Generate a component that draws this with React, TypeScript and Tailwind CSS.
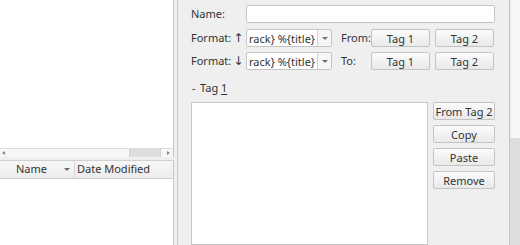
import React from "react";

const font = { fontFamily: '"Noto Sans", "Open Sans", sans-serif' };

function Btn({ label, className = "" }: { label: React.ReactNode; className?: string }) {
  return (
    <div
      className={`flex h-[18px] items-center justify-center rounded-[2px] border border-[#c4c4c4] bg-gradient-to-b from-[#fbfbfb] to-[#e9e9e9] text-[11px] leading-none text-[#333333] ${className}`}
    >
      {label}
    </div>
  );
}

function Combo() {
  return (
    <div className="flex h-[18px] w-[86px] overflow-hidden rounded-[2px] border border-[#c4c4c4] bg-white">
      <div className="flex flex-1 items-center overflow-hidden whitespace-nowrap pl-[2px] text-[11px] leading-none text-[#333333]">
        {"rack} %{title}"}
      </div>
      <div className="flex w-[14px] items-center justify-center border-l border-[#d4d4d4] bg-[#f6f6f6]">
        <span className="block h-0 w-0 border-x-[3px] border-t-[3px] border-x-transparent border-t-[#707070]" />
      </div>
    </div>
  );
}

function FormatRow({ arrow, side }: { arrow: string; side: string }) {
  return (
    <div className="flex h-[18px] items-center">
      <div className="flex w-[55px] items-center whitespace-nowrap text-[11px]">
        Format:
        <span className="ml-[2px] text-[12px] leading-none" style={{ fontFamily: '"DejaVu Sans", sans-serif' }}>
          {arrow}
        </span>
      </div>
      <Combo />
      <div className="ml-[9px] w-[30px] text-[11px]">{side}</div>
      <Btn label="Tag 1" className="w-[59px]" />
      <Btn label="Tag 2" className="ml-[5px] w-[59px]" />
    </div>
  );
}

export default function App() {
  return (
    <div
      className="flex h-[245px] w-[520px] overflow-hidden bg-[#efefef] text-[#333333]"
      style={font}
    >
      {/* left: tree + file list */}
      <div className="flex w-[175px] flex-col">
        <div className="flex h-[157px] flex-col border-r border-[#c8c8c8] bg-white">
          <div className="flex-1" />
          <div className="flex h-[9px] items-center border-t border-[#dcdcdc] bg-[#f7f7f7]">
            <span className="ml-[2px] block h-0 w-0 border-y-[2px] border-r-[3px] border-y-transparent border-r-[#8a8a8a]" />
            <div className="flex-1" />
            <div className="mr-[6px] h-full w-[32px] border-x border-[#d0d0d0] bg-[#dedede]" />
            <span className="mr-[3px] block h-0 w-0 border-y-[2px] border-l-[3px] border-y-transparent border-l-[#8a8a8a]" />
          </div>
        </div>
        <div className="h-[3px]" />
        <div className="flex flex-1 flex-col border-r border-[#c8c8c8] bg-white">
          <div className="flex h-[19px] items-center border-y border-[#d0d0d0] bg-gradient-to-b from-[#f7f7f7] to-[#ececec] text-[11px]">
            <div className="relative flex h-full w-[75px] items-center border-r border-[#d6d6d6] pl-[16px]">
              Name
              <span className="absolute right-[4px] top-[7px] block h-0 w-0 border-x-[3px] border-t-[3px] border-x-transparent border-t-[#6a6a6a]" />
            </div>
            <div className="pl-[2px]">Date Modified</div>
          </div>
          <div className="flex-1" />
        </div>
      </div>

      {/* splitter */}
      <div className="w-[3px]" />

      {/* right: tag editor */}
      <div className="flex flex-1 border-l border-[#c8c8c8]">
        <div className="flex flex-1 flex-col pl-[13px] pr-[14px] pt-[5px]">
          <div className="flex h-[18px] items-center">
            <div className="w-[55px] text-[11px]">Name:</div>
            <div className="h-[18px] flex-1 rounded-[2px] border border-[#c4c4c4] bg-white" />
          </div>
          <div className="mt-[6px]">
            <FormatRow arrow="↑" side="From:" />
          </div>
          <div className="mt-[5px]">
            <FormatRow arrow="↓" side="To:" />
          </div>
          <div className="mt-[11px] flex h-[14px] items-center text-[11px]">
            <span className="ml-[1px] w-[8px]">-</span>
            <span>
              Tag <span className="underline underline-offset-2">1</span>
            </span>
          </div>
          <div className="mt-[7px] flex flex-1 gap-[5px]">
            <div className="w-[237px] border border-[#c8c8c8] bg-white" />
            <div className="flex w-[62px] flex-col gap-[5px]">
              <Btn label="From Tag 2" />
              <Btn label="Copy" />
              <Btn label="Paste" />
              <Btn label="Remove" />
            </div>
          </div>
        </div>
        {/* vertical scrollbar */}
        <div className="flex w-[11px] flex-col border-l border-[#c8c8c8]">
          <div className="h-[138px] border-l border-[#e6e6e6] bg-[#f8f8f8]" />
          <div className="flex-1 bg-[#dddddd]" />
        </div>
      </div>
    </div>
  );
}
